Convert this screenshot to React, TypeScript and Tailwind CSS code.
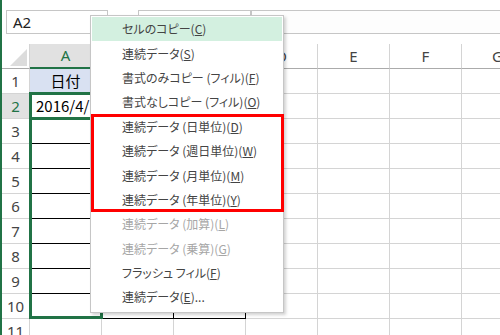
import { ReactNode } from 'react'
import clsx from 'clsx'

const cols = ['A', 'B', 'C', 'D', 'E', 'F', 'G']
const rows = [1, 2, 3, 4, 5, 6, 7, 8, 9, 10, 11]

type Item = { label: string; key: string; tail?: string; disabled?: boolean; active?: boolean }

const items: Item[] = [
  { label: 'セルのコピー(', key: 'C', tail: ')', active: true },
  { label: '連続データ(', key: 'S', tail: ')' },
  { label: '書式のみコピー (フィル)(', key: 'F', tail: ')' },
  { label: '書式なしコピー (フィル)(', key: 'O', tail: ')' },
  { label: '連続データ (日単位)(', key: 'D', tail: ')' },
  { label: '連続データ (週日単位)(', key: 'W', tail: ')' },
  { label: '連続データ (月単位)(', key: 'M', tail: ')' },
  { label: '連続データ (年単位)(', key: 'Y', tail: ')' },
  { label: '連続データ (加算)(', key: 'L', tail: ')', disabled: true },
  { label: '連続データ (乗算)(', key: 'G', tail: ')', disabled: true },
  { label: 'フラッシュ フィル(', key: 'F', tail: ')' },
  { label: '連続データ(', key: 'E', tail: ')...' },
]

function MenuItem({ item }: { item: Item }) {
  return (
    <div
      className={clsx(
        'h-[24.4px] flex items-center pl-[30px] text-[12px] leading-none whitespace-nowrap',
        item.active && 'bg-[#d3f0e0]',
        item.disabled ? 'text-[#a6a6a6]' : 'text-[#444444]'
      )}
    >
      {item.label}
      <span className="underline underline-offset-[1px]">{item.key}</span>
      {item.tail}
    </div>
  )
}

function Cell({ r, c }: { r: number; c: string }) {
  const boxed = r >= 3 && r <= 10 && (c === 'A' || c === 'B' || c === 'C')
  let content: ReactNode = null
  if (r === 1 && c === 'A') content = <span className="mx-auto">日付</span>
  if (r === 2 && c === 'A') content = <span className="pl-[6px] whitespace-nowrap">2016/4/1</span>
  return (
    <div
      className={clsx(
        'w-[72px] h-full shrink-0 border-r border-b flex items-center text-[15px] text-black overflow-visible',
        boxed ? 'border-black' : 'border-[#d4d4d4]',
        r === 1 && c !== 'D' && c !== 'E' && c !== 'F' && c !== 'G' ? 'bg-[#d9e1f2]' : 'bg-white'
      )}
    >
      {content}
    </div>
  )
}

export default function App() {
  return (
    <div className="relative w-[500px] h-[335px] overflow-hidden bg-white border-l-2 border-[#217346] font-['Noto_Sans_CJK_JP','Noto_Sans',sans-serif]">
      {/* formula bar */}
      <div className="h-[44px] pt-[10px] flex items-start">
        <div className="ml-[4px] w-[102px] h-[24px] border border-[#c6c6c6] flex items-center pl-[6px] text-[15px] text-[#222] font-['Noto_Sans',sans-serif]">
          A2
        </div>
        <div className="ml-[30px] w-[113px] h-[24px] border border-[#c6c6c6]" />
        <div className="flex-1 h-[24px] border border-r-0 border-[#c6c6c6] bg-[#fdfdfd]" />
      </div>

      {/* column headers */}
      <div className="flex h-[25px] font-['Noto_Sans',sans-serif]">
        <div className="w-[28px] shrink-0 border-r border-b border-[#ababab] border-r-[#d4d4d4] flex items-end justify-end pr-[2px] pb-[2px]">
          <svg width="17" height="17" viewBox="0 0 17 17">
            <polygon points="17,0 17,17 0,17" fill="#dcdcdc" />
          </svg>
        </div>
        {cols.map((c) => (
          <div
            key={c}
            className={clsx(
              'w-[72px] shrink-0 border-r border-[#d4d4d4] flex items-center justify-center text-[15px]',
              c === 'A'
                ? 'bg-[#e1e1e1] text-[#217346] border-b-2 border-b-[#217346]'
                : 'bg-white text-[#444444] border-b border-b-[#ababab]'
            )}
          >
            {c}
          </div>
        ))}
      </div>

      {/* rows */}
      {rows.map((r) => (
        <div key={r} className="flex h-[25px]">
          <div
            className={clsx(
              'w-[28px] shrink-0 border-r border-b border-[#d4d4d4] flex items-center justify-center text-[15px] font-[\'Noto_Sans\',sans-serif]',
              r === 2 ? 'bg-[#e1e1e1] text-[#217346]' : 'bg-white text-[#444444]'
            )}
          >
            {r}
          </div>
          {cols.map((c) => (
            <Cell key={c} r={r} c={c} />
          ))}
        </div>
      ))}

      {/* fill range + active cell */}
      <div className="absolute left-[27px] top-[92px] w-[74px] h-[227px] border-[3px] border-[#217346] pointer-events-none" />
      <div className="absolute left-[27px] top-[92px] w-[74px] h-[28px] border-[3px] border-[#217346] pointer-events-none" />

      {/* context menu */}
      <div className="absolute left-[88px] top-[15px] w-[194px] bg-white border border-[#c6c6c6] p-[1px] pb-[2px] shadow-[2px_2px_3px_rgba(0,0,0,0.18)] [font-feature-settings:'palt']">
        {items.slice(0, 4).map((it, i) => (
          <MenuItem key={i} item={it} />
        ))}
        <div className="relative">
          {items.slice(4, 8).map((it, i) => (
            <MenuItem key={i} item={it} />
          ))}
          <div className="absolute -left-[1px] -right-[2px] -top-[0.5px] bottom-0 border-[3px] border-[#ff0000]" />
        </div>
        {items.slice(8).map((it, i) => (
          <MenuItem key={i} item={it} />
        ))}
      </div>
    </div>
  )
}
